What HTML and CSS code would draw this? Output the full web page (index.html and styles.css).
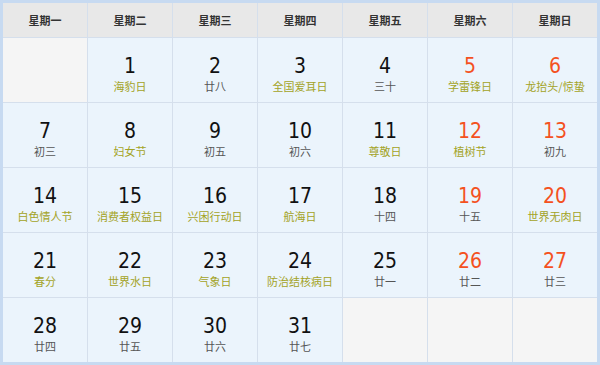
FILE: index.html
```html
<!DOCTYPE html>
<html lang="zh-CN">
<head>
<meta charset="utf-8">
<title>日历</title>
<link rel="stylesheet" href="styles.css">
</head>
<body>
<div class="cal">
  <div class="hd">星期一</div>
  <div class="hd">星期二</div>
  <div class="hd">星期三</div>
  <div class="hd">星期四</div>
  <div class="hd">星期五</div>
  <div class="hd">星期六</div>
  <div class="hd">星期日</div>

  <div class="cell empty"></div>
  <div class="cell"><span class="num">1</span><span class="sub fest">海豹日</span></div>
  <div class="cell"><span class="num">2</span><span class="sub">廿八</span></div>
  <div class="cell"><span class="num">3</span><span class="sub fest">全国爱耳日</span></div>
  <div class="cell"><span class="num">4</span><span class="sub">三十</span></div>
  <div class="cell"><span class="num red">5</span><span class="sub fest">学雷锋日</span></div>
  <div class="cell"><span class="num red">6</span><span class="sub fest">龙抬头/惊蛰</span></div>

  <div class="cell"><span class="num">7</span><span class="sub">初三</span></div>
  <div class="cell"><span class="num">8</span><span class="sub fest">妇女节</span></div>
  <div class="cell"><span class="num">9</span><span class="sub">初五</span></div>
  <div class="cell"><span class="num">10</span><span class="sub">初六</span></div>
  <div class="cell"><span class="num">11</span><span class="sub fest">尊敬日</span></div>
  <div class="cell"><span class="num red">12</span><span class="sub fest">植树节</span></div>
  <div class="cell"><span class="num red">13</span><span class="sub">初九</span></div>

  <div class="cell"><span class="num">14</span><span class="sub fest">白色情人节</span></div>
  <div class="cell"><span class="num">15</span><span class="sub fest">消费者权益日</span></div>
  <div class="cell"><span class="num">16</span><span class="sub fest">兴困行动日</span></div>
  <div class="cell"><span class="num">17</span><span class="sub fest">航海日</span></div>
  <div class="cell"><span class="num">18</span><span class="sub">十四</span></div>
  <div class="cell"><span class="num red">19</span><span class="sub">十五</span></div>
  <div class="cell"><span class="num red">20</span><span class="sub fest">世界无肉日</span></div>

  <div class="cell"><span class="num">21</span><span class="sub fest">春分</span></div>
  <div class="cell"><span class="num">22</span><span class="sub fest">世界水日</span></div>
  <div class="cell"><span class="num">23</span><span class="sub fest">气象日</span></div>
  <div class="cell"><span class="num">24</span><span class="sub fest">防治结核病日</span></div>
  <div class="cell"><span class="num">25</span><span class="sub">廿一</span></div>
  <div class="cell"><span class="num red">26</span><span class="sub">廿二</span></div>
  <div class="cell"><span class="num red">27</span><span class="sub">廿三</span></div>

  <div class="cell"><span class="num">28</span><span class="sub">廿四</span></div>
  <div class="cell"><span class="num">29</span><span class="sub">廿五</span></div>
  <div class="cell"><span class="num">30</span><span class="sub">廿六</span></div>
  <div class="cell"><span class="num">31</span><span class="sub">廿七</span></div>
  <div class="cell empty"></div>
  <div class="cell empty"></div>
  <div class="cell empty"></div>
</div>
</body>
</html>
```
FILE: styles.css
```css
html, body {
  margin: 0;
  padding: 0;
  background: #ffffff;
}
.cal {
  width: 594px;
  height: 359px;
  border: 3px solid #c7daf1;
  background: #d5dfec;
  display: grid;
  grid-template-columns: repeat(7, 84px);
  grid-template-rows: 34px repeat(5, 64px);
  gap: 1px;
  font-family: "Noto Sans CJK SC", sans-serif;
}
.hd {
  background: #e8e8e8;
  color: #333333;
  font-size: 11px;
  font-weight: bold;
  display: flex;
  align-items: center;
  justify-content: center;
  padding-bottom: 1px;
}
.cell {
  background: #ebf4fc;
  display: flex;
  flex-direction: column;
  align-items: center;
  padding-top: 18px;
  box-sizing: border-box;
}
.cell.empty {
  background: #f5f5f5;
}
.num {
  font-family: "DejaVu Sans Condensed", "DejaVu Sans", sans-serif;
  font-stretch: condensed;
  font-size: 21px;
  line-height: 20px;
  color: #111111;
}
.num.red {
  color: #f4511e;
}
.sub {
  font-size: 11px;
  line-height: 14px;
  color: #555555;
  margin-top: 3px;
}
.sub.fest {
  color: #a3a326;
}
```
